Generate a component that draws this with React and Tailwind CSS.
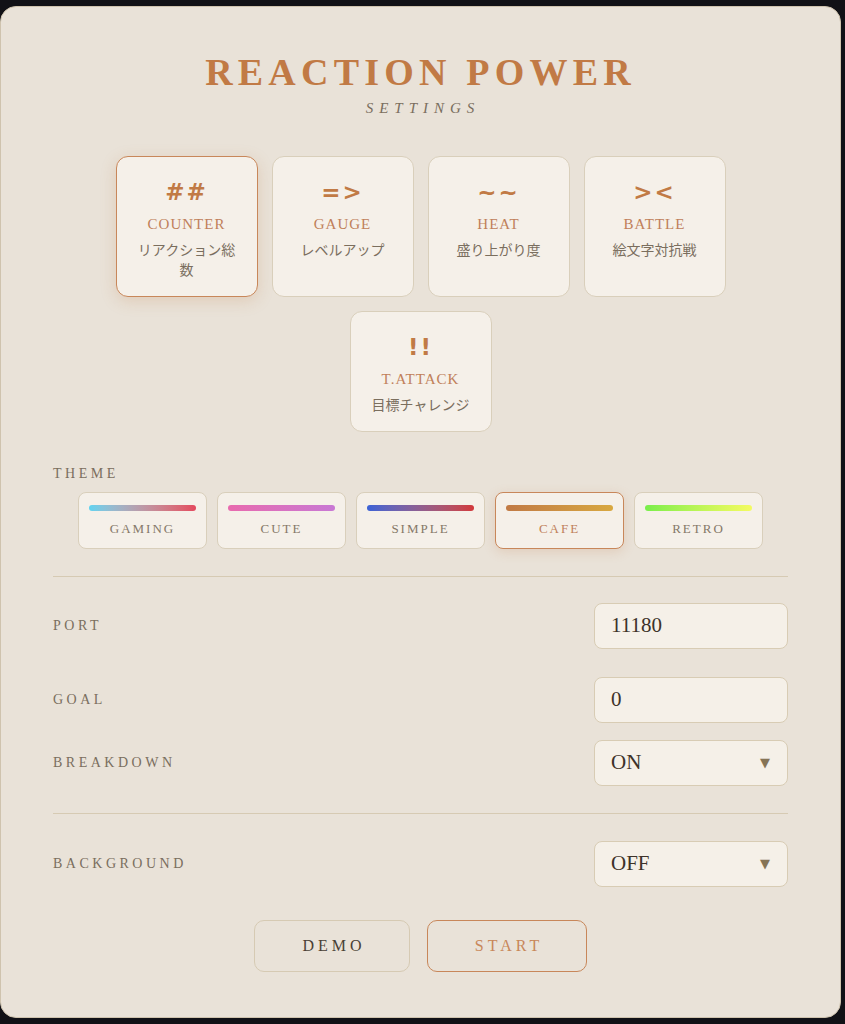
import React from "react";

const serif = { fontFamily: '"Liberation Serif", "DejaVu Serif", serif' };

const modes = [
  { icon: "##", name: "COUNTER", sub: "リアクション総数", active: true },
  { icon: "=>", name: "GAUGE", sub: "レベルアップ" },
  { icon: "~~", name: "HEAT", sub: "盛り上がり度" },
  { icon: "><", name: "BATTLE", sub: "絵文字対抗戦" },
  { icon: "!!", name: "T.ATTACK", sub: "目標チャレンジ" },
];

const themes = [
  { name: "GAMING", bar: "bg-gradient-to-r from-[#5fd3f0] to-[#e3485e]" },
  { name: "CUTE", bar: "bg-gradient-to-r from-[#e86aae] to-[#c878d4]" },
  { name: "SIMPLE", bar: "bg-gradient-to-r from-[#3a62d6] to-[#d2383a]" },
  { name: "CAFE", bar: "bg-gradient-to-r from-[#c17a45] to-[#d8a840]", active: true },
  { name: "RETRO", bar: "bg-gradient-to-r from-[#78ee4c] to-[#f4fb62]" },
];

function Label({ children }) {
  return (
    <div className="text-[14px] leading-[18px] tracking-[3.5px] text-[#7a6e5e]" style={serif}>
      {children}
    </div>
  );
}

function Field({ value, select }) {
  return (
    <div className="flex h-[46px] w-[194px] items-center justify-between rounded-[8px] border border-[#d8ccb4] bg-[#f5f0e8] pl-[16px] pr-[17px]">
      <span className="text-[21px] text-[#3d3229]" style={serif}>{value}</span>
      {select && <span className="text-[13px] text-[#857456]" style={{ fontFamily: '"DejaVu Sans", sans-serif' }}>▼</span>}
    </div>
  );
}

export default function App() {
  return (
    <div className="min-h-[1024px] bg-[#111116] pt-[6px]">
      <div className="flex h-[1012px] w-[841px] flex-col rounded-[16px] border border-[#cfc3ae] bg-[#e9e2d8] px-[52px] pt-[43px]">
        <h1
          className="text-center text-[38px] font-bold leading-[44px] tracking-[5.2px] text-[#c17a45]"
          style={serif}
        >
          REACTION POWER
        </h1>
        <div className="mt-[5px] pl-[5px] text-center text-[15px] italic leading-[18px] tracking-[6px] text-[#7a6e5e]" style={serif}>
          SETTINGS
        </div>

        <div className="mx-auto mt-[39px] flex w-[610px] flex-wrap justify-center gap-[14px]">
          {modes.map((m) => (
            <div
              key={m.name}
              className={`flex w-[142px] flex-col items-center rounded-[12px] border bg-[#f5f0e9] px-[15px] pb-[17px] pt-[21px] text-center ${
                m.active
                  ? "border-[#c8875a] shadow-[0_4px_16px_rgba(193,122,69,0.22)]"
                  : "border-[#d9cfbb]"
              }`}
            >
              <div
                className="text-[23px] font-bold leading-[28px] tracking-[2px] text-[#c17a45]"
                style={{ fontFamily: '"DejaVu Sans", sans-serif' }}
              >
                {m.icon}
              </div>
              <div className="mt-[8px] text-[15px] leading-[20px] tracking-[1px] text-[#c0805a]" style={serif}>
                {m.name}
              </div>
              <div
                className="mt-[5px] text-[14px] leading-[20px] text-[#7a6e5e]"
                style={{ fontFamily: '"Noto Sans CJK JP", "Noto Sans", sans-serif' }}
              >
                {m.sub}
              </div>
            </div>
          ))}
        </div>

        <div className="mt-[33px]">
          <Label>THEME</Label>
        </div>
        <div className="mt-[9px] flex justify-center gap-[10px]">
          {themes.map((t) => (
            <div
              key={t.name}
              className={`flex h-[57px] w-[129px] flex-col items-stretch rounded-[8px] border bg-[#f5f0e9] px-[10px] pt-[12px] ${
                t.active
                  ? "border-[#c8875a] shadow-[0_3px_12px_rgba(193,122,69,0.2)]"
                  : "border-[#d9cfbb]"
              }`}
            >
              <div className={`h-[6px] rounded-full ${t.bar}`} />
              <div
                className={`mt-[10px] text-center text-[13px] leading-[16px] tracking-[2px] ${
                  t.active ? "text-[#c0805a]" : "text-[#857868]"
                }`}
                style={serif}
              >
                {t.name}
              </div>
            </div>
          ))}
        </div>

        <div className="mt-[27px] h-px bg-[#d6cab3]" />

        <div className="mt-[26px] flex items-center justify-between">
          <Label>PORT</Label>
          <Field value="11180" />
        </div>
        <div className="mt-[28px] flex items-center justify-between">
          <Label>GOAL</Label>
          <Field value="0" />
        </div>
        <div className="mt-[17px] flex items-center justify-between">
          <Label>BREAKDOWN</Label>
          <Field value="ON" select />
        </div>

        <div className="mt-[27px] h-px bg-[#d6cab3]" />

        <div className="mt-[27px] flex items-center justify-between">
          <Label>BACKGROUND</Label>
          <Field value="OFF" select />
        </div>

        <div className="mt-[33px] flex justify-center gap-[17px]">
          <button
            className="h-[52px] w-[156px] rounded-[10px] border border-[#d6cab3] pl-[4px] text-[16px] tracking-[4px] text-[#4a3f35]"
            style={serif}
          >
            DEMO
          </button>
          <button
            className="h-[52px] w-[160px] rounded-[10px] border-[1.5px] border-[#c8875a] pl-[4px] text-[16px] tracking-[4px] text-[#c8875a]"
            style={serif}
          >
            START
          </button>
        </div>
      </div>
    </div>
  );
}
